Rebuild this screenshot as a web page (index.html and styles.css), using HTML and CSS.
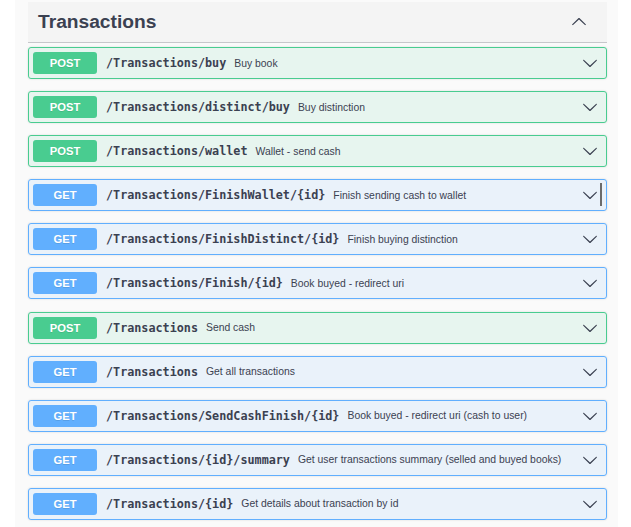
FILE: index.html
```html
<!DOCTYPE html>
<html lang="en">
<head>
<meta charset="utf-8">
<title>Transactions</title>
<link rel="stylesheet" href="styles.css">
</head>
<body>
<div class="panel">
  <div class="tag-header">
    <h4 class="tag-title">Transactions</h4>
    <svg class="caret up" viewBox="0 0 20 20" width="16" height="16"><path d="M17.418 6.109c.272-.268.709-.268.979 0s.271.701 0 .969l-7.908 7.83c-.27.268-.707.268-.979 0l-7.908-7.830c-.27-.268-.27-.701 0-.969.271-.268.709-.268.979 0L10 13.25l7.418-7.141z"/></svg>
  </div>

  <div class="op post"><span class="method">POST</span><span class="path">/Transactions/buy</span><span class="desc">Buy book</span><svg class="caret" viewBox="0 0 20 20" width="16" height="16"><path d="M17.418 6.109c.272-.268.709-.268.979 0s.271.701 0 .969l-7.908 7.83c-.27.268-.707.268-.979 0l-7.908-7.83c-.27-.268-.27-.701 0-.969.271-.268.709-.268.979 0L10 13.25l7.418-7.141z"/></svg></div>

  <div class="op post"><span class="method">POST</span><span class="path">/Transactions/distinct/buy</span><span class="desc">Buy distinction</span><svg class="caret" viewBox="0 0 20 20" width="16" height="16"><path d="M17.418 6.109c.272-.268.709-.268.979 0s.271.701 0 .969l-7.908 7.83c-.27.268-.707.268-.979 0l-7.908-7.83c-.27-.268-.27-.701 0-.969.271-.268.709-.268.979 0L10 13.25l7.418-7.141z"/></svg></div>

  <div class="op post"><span class="method">POST</span><span class="path">/Transactions/wallet</span><span class="desc">Wallet - send cash</span><svg class="caret" viewBox="0 0 20 20" width="16" height="16"><path d="M17.418 6.109c.272-.268.709-.268.979 0s.271.701 0 .969l-7.908 7.83c-.27.268-.707.268-.979 0l-7.908-7.83c-.27-.268-.27-.701 0-.969.271-.268.709-.268.979 0L10 13.25l7.418-7.141z"/></svg></div>

  <div class="op get"><span class="method">GET</span><span class="path">/Transactions/FinishWallet/{id}</span><span class="desc">Finish sending cash to wallet</span><svg class="caret" viewBox="0 0 20 20" width="16" height="16"><path d="M17.418 6.109c.272-.268.709-.268.979 0s.271.701 0 .969l-7.908 7.83c-.27.268-.707.268-.979 0l-7.908-7.83c-.27-.268-.27-.701 0-.969.271-.268.709-.268.979 0L10 13.25l7.418-7.141z"/></svg><span class="cursor"></span></div>

  <div class="op get"><span class="method">GET</span><span class="path">/Transactions/FinishDistinct/{id}</span><span class="desc">Finish buying distinction</span><svg class="caret" viewBox="0 0 20 20" width="16" height="16"><path d="M17.418 6.109c.272-.268.709-.268.979 0s.271.701 0 .969l-7.908 7.83c-.27.268-.707.268-.979 0l-7.908-7.83c-.27-.268-.27-.701 0-.969.271-.268.709-.268.979 0L10 13.25l7.418-7.141z"/></svg></div>

  <div class="op get"><span class="method">GET</span><span class="path">/Transactions/Finish/{id}</span><span class="desc">Book buyed - redirect uri</span><svg class="caret" viewBox="0 0 20 20" width="16" height="16"><path d="M17.418 6.109c.272-.268.709-.268.979 0s.271.701 0 .969l-7.908 7.83c-.27.268-.707.268-.979 0l-7.908-7.83c-.27-.268-.27-.701 0-.969.271-.268.709-.268.979 0L10 13.25l7.418-7.141z"/></svg></div>

  <div class="op post"><span class="method">POST</span><span class="path">/Transactions</span><span class="desc">Send cash</span><svg class="caret" viewBox="0 0 20 20" width="16" height="16"><path d="M17.418 6.109c.272-.268.709-.268.979 0s.271.701 0 .969l-7.908 7.83c-.27.268-.707.268-.979 0l-7.908-7.83c-.27-.268-.27-.701 0-.969.271-.268.709-.268.979 0L10 13.25l7.418-7.141z"/></svg></div>

  <div class="op get"><span class="method">GET</span><span class="path">/Transactions</span><span class="desc">Get all transactions</span><svg class="caret" viewBox="0 0 20 20" width="16" height="16"><path d="M17.418 6.109c.272-.268.709-.268.979 0s.271.701 0 .969l-7.908 7.83c-.27.268-.707.268-.979 0l-7.908-7.83c-.27-.268-.27-.701 0-.969.271-.268.709-.268.979 0L10 13.25l7.418-7.141z"/></svg></div>

  <div class="op get"><span class="method">GET</span><span class="path">/Transactions/SendCashFinish/{id}</span><span class="desc">Book buyed - redirect uri (cash to user)</span><svg class="caret" viewBox="0 0 20 20" width="16" height="16"><path d="M17.418 6.109c.272-.268.709-.268.979 0s.271.701 0 .969l-7.908 7.83c-.27.268-.707.268-.979 0l-7.908-7.83c-.27-.268-.27-.701 0-.969.271-.268.709-.268.979 0L10 13.25l7.418-7.141z"/></svg></div>

  <div class="op get"><span class="method">GET</span><span class="path">/Transactions/{id}/summary</span><span class="desc">Get user transactions summary (selled and buyed books)</span><svg class="caret" viewBox="0 0 20 20" width="16" height="16"><path d="M17.418 6.109c.272-.268.709-.268.979 0s.271.701 0 .969l-7.908 7.83c-.27.268-.707.268-.979 0l-7.908-7.83c-.27-.268-.27-.701 0-.969.271-.268.709-.268.979 0L10 13.25l7.418-7.141z"/></svg></div>

  <div class="op get"><span class="method">GET</span><span class="path">/Transactions/{id}</span><span class="desc">Get details about transaction by id</span><svg class="caret" viewBox="0 0 20 20" width="16" height="16"><path d="M17.418 6.109c.272-.268.709-.268.979 0s.271.701 0 .969l-7.908 7.83c-.27.268-.707.268-.979 0l-7.908-7.83c-.27-.268-.27-.701 0-.969.271-.268.709-.268.979 0L10 13.25l7.418-7.141z"/></svg></div>
</div>
</body>
</html>
```

FILE: styles.css
```css
html, body {
  margin: 0;
  padding: 0;
  background: #ffffff;
  font-family: "Liberation Sans", Arial, sans-serif;
  color: #3b4151;
}

.panel {
  box-sizing: border-box;
  margin-left: 15px;
  width: 603px;
  min-height: 527px;
  background: #fafafa;
  padding: 2px 11px 0 13px;
}

.tag-header {
  box-sizing: border-box;
  height: 41px;
  display: flex;
  align-items: center;
  justify-content: space-between;
  padding: 0 20px 0 10px;
  background: #f4f4f4;
  border-bottom: 1px solid #c6c7cb;
  margin-bottom: 4px;
}

.tag-title {
  margin: 0;
  font-size: 19.2px;
  font-weight: bold;
  color: #3b4151;
  line-height: 1;
  padding-bottom: 1px;
}

.caret {
  flex: none;
  fill: #3b4151;
  display: block;
}

.caret.up {
  transform: rotate(180deg);
  margin-top: -1px;
}

.op {
  position: relative;
  box-sizing: border-box;
  height: 32px;
  display: flex;
  align-items: center;
  padding: 0 8px 0 4px;
  margin-bottom: 12.1px;
  border: 1px solid;
  border-radius: 3px;
  box-shadow: 0 0 2px rgba(0, 0, 0, 0.15);
}

.op.post {
  border-color: #49cc90;
  background: rgba(73, 204, 144, 0.1);
}

.op.get {
  border-color: #61affe;
  background: rgba(97, 175, 254, 0.1);
}

.method {
  flex: none;
  width: 64px;
  height: 22px;
  line-height: 22px;
  text-align: center;
  border-radius: 3px;
  color: #ffffff;
  font-size: 11.2px;
  font-weight: bold;
  text-shadow: 0 1px 0 rgba(0, 0, 0, 0.1);
}

.post .method { background: #49cc90; }
.get .method { background: #61affe; }

.path {
  flex: none;
  padding: 0 8px 0 9px;
  font-family: "DejaVu Sans Mono", "Liberation Mono", monospace;
  font-size: 11.75px;
  font-weight: bold;
  color: #3b4151;
}

.desc {
  flex: 1 1 auto;
  font-size: 10.4px;
  color: #3b4151;
  white-space: nowrap;
}

.cursor {
  position: absolute;
  left: 571px;
  top: 3px;
  width: 2px;
  height: 23px;
  background: #6b6b6b;
}
```
